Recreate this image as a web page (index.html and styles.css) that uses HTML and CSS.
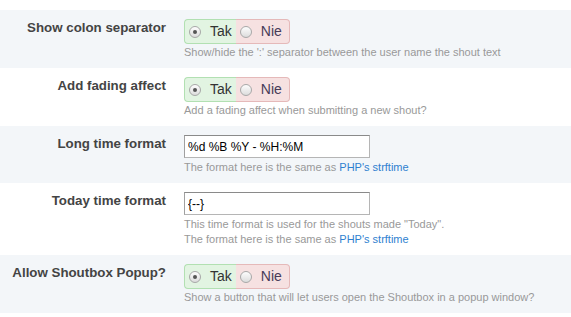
FILE: index.html
```html
<!DOCTYPE html>
<html lang="pl">
<head>
    <meta charset="UTF-8">
    <title>Shoutbox settings</title>
    <link rel="stylesheet" href="styles.css">
</head>
<body>
    <div class="settings">
        <div class="row alt">
            <div class="label">Show colon separator</div>
            <div class="field">
                <div class="toggle">
                    <span class="yes"><span class="radio checked"></span>Tak</span>
                    <span class="no"><span class="radio"></span>Nie</span>
                </div>
                <div class="desc">Show/hide the ':' separator between the user name the shout text</div>
            </div>
        </div>
        <div class="row">
            <div class="label">Add fading affect</div>
            <div class="field">
                <div class="toggle">
                    <span class="yes"><span class="radio checked"></span>Tak</span>
                    <span class="no"><span class="radio"></span>Nie</span>
                </div>
                <div class="desc">Add a fading affect when submitting a new shout?</div>
            </div>
        </div>
        <div class="row alt">
            <div class="label">Long time format</div>
            <div class="field">
                <input class="text" type="text" value="%d %B %Y - %H:%M">
                <div class="desc">The format here is the same as <a href="#">PHP's strftime</a></div>
            </div>
        </div>
        <div class="row">
            <div class="label">Today time format</div>
            <div class="field">
                <input class="text" type="text" value="{--}">
                <div class="desc">This time format is used for the shouts made "Today".<br>The format here is the same as <a href="#">PHP's strftime</a></div>
            </div>
        </div>
        <div class="row alt">
            <div class="label">Allow Shoutbox Popup?</div>
            <div class="field">
                <div class="toggle">
                    <span class="yes"><span class="radio checked"></span>Tak</span>
                    <span class="no"><span class="radio"></span>Nie</span>
                </div>
                <div class="desc">Show a button that will let users open the Shoutbox in a popup window?</div>
            </div>
        </div>
    </div>
</body>
</html>
```

FILE: styles.css
```css
body {
    margin: 0;
    padding: 10px 0 0;
    background: #fff;
    font-family: "Liberation Sans", Arial, sans-serif;
    color: #333;
}

.row {
    display: grid;
    grid-template-columns: 166px 1fr;
    column-gap: 18px;
    padding: 9px 0 8px;
}

.row.alt {
    background-color: #f3f6f9;
}

.label {
    text-align: right;
    font-size: 13.3px;
    font-weight: bold;
    color: #444;
    line-height: 16px;
    padding-top: 1px;
}

.field {
    display: flex;
    flex-direction: column;
    align-items: flex-start;
}

.toggle {
    display: flex;
    height: 25px;
    font-size: 14px;
    line-height: 23px;
}

.toggle .yes,
.toggle .no {
    display: flex;
    align-items: center;
    border: 1px solid;
}

.toggle .yes {
    background-color: #e2f4e2;
    border-color: #b2e0b2;
    border-right: none;
    border-radius: 4px 0 0 4px;
    padding: 0 4px 0 4px;
    color: #333;
}

.toggle .no {
    background-color: #f6e1e1;
    border-color: #e5b9b9;
    border-left: none;
    border-radius: 0 4px 4px 0;
    padding: 0 7px 0 4px;
    color: #473c58;
}

.radio {
    width: 10px;
    height: 10px;
    border: 1px solid #a8a8a8;
    border-radius: 50%;
    background: linear-gradient(#fdfdfd, #dcdcdc);
    margin-right: 9px;
    position: relative;
}

.radio.checked::after {
    content: "";
    position: absolute;
    left: 3px;
    top: 3px;
    width: 4px;
    height: 4px;
    border-radius: 50%;
    background: #555;
}

.text {
    box-sizing: border-box;
    width: 186px;
    height: 23px;
    margin: 0;
    padding: 0 3px;
    border: 1px solid #b5b5b5;
    border-top-color: #8a8a8a;
    border-left-color: #a0a0a0;
    font-family: "Liberation Sans", Arial, sans-serif;
    font-size: 12px;
    color: #000;
    background: #fff;
}

.desc {
    margin-top: 2px;
    font-size: 11px;
    line-height: 15px;
    color: #999;
}

.toggle + .desc {
    margin-top: 1px;
}

.desc a {
    color: #2f7fd0;
    text-decoration: none;
}
```
